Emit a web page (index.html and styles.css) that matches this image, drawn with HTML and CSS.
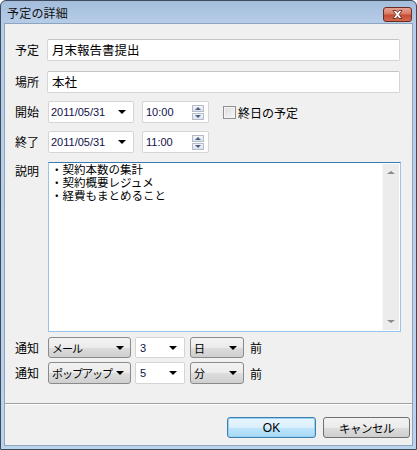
FILE: index.html
```html
<!DOCTYPE html>
<html lang="ja">
<head>
<meta charset="utf-8">
<link rel="stylesheet" href="styles.css">
</head>
<body>
<div class="window">
  <div class="titlebar">
    <span class="title">予定の詳細</span>
    <span class="close">
      <svg width="29" height="15" viewBox="0 0 29 15">
        <path d="M10 3.5 L13 3.5 L14.5 5.5 L16 3.5 L19 3.5 L16.2 7.5 L19 11.5 L16 11.5 L14.5 9.5 L13 11.5 L10 11.5 L12.8 7.5 Z" fill="#fff" stroke="#5a1a10" stroke-width="0.8"/>
      </svg>
    </span>
  </div>
  <div class="client">
    <div class="row r1">
      <span class="label">予定</span>
      <div class="textbox wide">月末報告書提出</div>
    </div>
    <div class="row r2">
      <span class="label">場所</span>
      <div class="textbox wide">本社</div>
    </div>
    <div class="row r3">
      <span class="label">開始</span>
      <div class="ecombo date"><span class="num">2011/05/31</span><span class="arrow"></span></div>
      <div class="timebox"><span class="num">10:00</span>
        <span class="spin"><span class="sb up"></span><span class="sb down"></span></span>
      </div>
      <span class="check"></span><span class="checklabel">終日の予定</span>
    </div>
    <div class="row r4">
      <span class="label">終了</span>
      <div class="ecombo date"><span class="num">2011/05/31</span><span class="arrow"></span></div>
      <div class="timebox"><span class="num">11:00</span>
        <span class="spin"><span class="sb up"></span><span class="sb down"></span></span>
      </div>
    </div>
    <div class="row desc">
      <span class="label">説明</span>
      <div class="textarea">
        <div class="lines">
          <div class="line">・契約本数の集計</div>
          <div class="line">・契約概要レジュメ</div>
          <div class="line">・経費もまとめること</div>
        </div>
        <div class="vscroll"><span class="sup"></span><span class="sdown"></span></div>
      </div>
    </div>
    <div class="row n1">
      <span class="label">通知</span>
      <div class="dcombo c1"><span class="ctext">メール</span><span class="arrow"></span></div>
      <div class="ecombo c2"><span class="num">3</span><span class="arrow"></span></div>
      <div class="dcombo c3"><span class="ctext">日</span><span class="arrow"></span></div>
      <span class="mae">前</span>
    </div>
    <div class="row n2">
      <span class="label">通知</span>
      <div class="dcombo c1"><span class="ctext">ポップアップ</span><span class="arrow"></span></div>
      <div class="ecombo c2"><span class="num">5</span><span class="arrow"></span></div>
      <div class="dcombo c3"><span class="ctext">分</span><span class="arrow"></span></div>
      <span class="mae">前</span>
    </div>
    <div class="sep"></div>
    <div class="buttons">
      <div class="btn ok">OK</div>
      <div class="btn cancel">キャンセル</div>
    </div>
  </div>
</div>
</body>
</html>
```

FILE: styles.css
```css
html, body {
  margin: 0;
  padding: 0;
  background: #ffffff;
}
body {
  width: 417px;
  height: 450px;
  overflow: hidden;
  font-family: "Noto Sans CJK JP", "Liberation Sans", sans-serif;
  font-size: 12px;
  color: #000;
}
.window {
  box-sizing: border-box;
  width: 417px;
  height: 450px;
  border: 1px solid #3d4a5c;
  border-radius: 6px 6px 0 0;
  background: linear-gradient(#a3bddb 0px, #b6cde7 22px, #bcd3ec 100%);
  padding: 0 3px 3px 3px;
  display: flex;
  flex-direction: column;
}
.titlebar {
  height: 22px;
  display: flex;
  align-items: center;
  justify-content: space-between;
  flex: none;
}
.title {
  padding-left: 3px;
  margin-top: 1px;
  font-size: 12px;
  color: #111;
  letter-spacing: 0.2px;
}
.close {
  width: 29px;
  height: 15px;
  margin-top: 4px;
  margin-right: 1px;
  box-sizing: border-box;
  border: 1px solid #6b2a22;
  border-radius: 3px;
  background: linear-gradient(#e8a393 0%, #d77a66 45%, #c44a33 55%, #d36b4f 100%);
  display: flex;
}
.close svg { display: block; margin: -1px; }
.client {
  flex: 1;
  background: #f0f0f0;
  border: 1px solid #8ea5c2;
  padding: 15px 0 0 10px;
  display: flex;
  flex-direction: column;
}
.row {
  display: flex;
  align-items: center;
  height: 22px;
  flex: none;
  white-space: nowrap;
}
.r2 { margin-top: 10px; }
.r3 { margin-top: 8px; }
.r4 { margin-top: 8px; }
.desc { margin-top: 9px; height: 170px; align-items: flex-start; }
.n1 { margin-top: 5px; height: 21px; }
.n2 { margin-top: 4px; height: 22px; }
.label {
  width: 32px;
  flex: none;
  line-height: 16px;
}
.desc .label { margin-top: 1px; }
.num {
  font-family: "Liberation Sans", "DejaVu Sans", sans-serif;
  font-size: 11px;
  color: #10104a;
}
.textbox {
  box-sizing: border-box;
  height: 22px;
  background: #fff;
  border: 1px solid #d5d5d5;
  border-top-color: #c4c4c4;
  border-radius: 2px;
  padding: 0 4px;
  line-height: 19px;
  font-size: 12.5px;
}
.wide { width: 353px; }
.ecombo {
  box-sizing: border-box;
  height: 22px;
  background: #fff;
  border: 1px solid #d5d5d5;
  border-radius: 2px;
  display: flex;
  align-items: center;
  justify-content: space-between;
  padding: 0 7px 0 2px;
}
.date { width: 86px; margin-left: 1px; }
.arrow {
  width: 0;
  height: 0;
  border-left: 4px solid transparent;
  border-right: 4px solid transparent;
  border-top: 4px solid #000;
  flex: none;
}
.timebox {
  box-sizing: border-box;
  width: 67px;
  height: 22px;
  margin-left: 8px;
  background: #fff;
  border: 1px solid #d5d5d5;
  border-radius: 2px;
  display: flex;
  align-items: center;
  justify-content: space-between;
  padding: 0 4px 0 3px;
}
.spin {
  display: flex;
  flex-direction: column;
  gap: 1px;
}
.sb {
  box-sizing: border-box;
  width: 12px;
  height: 7px;
  border: 1px solid #b5bcc7;
  background: linear-gradient(#f3f5f8, #dde3ec);
  position: relative;
}
.sb::after {
  content: "";
  position: absolute;
  left: 2px;
  width: 0;
  height: 0;
  border-left: 3px solid transparent;
  border-right: 3px solid transparent;
}
.up::after { top: 1px; border-bottom: 3px solid #4a5f8c; }
.down::after { top: 1px; border-top: 3px solid #4a5f8c; }
.check {
  box-sizing: border-box;
  width: 13px;
  height: 13px;
  margin-left: 14px;
  border: 1px solid #8f8f8f;
  background: linear-gradient(135deg, #dcdcdc, #f6f6f6);
  box-shadow: inset 0 0 0 1px #f4f4f4;
  flex: none;
}
.checklabel { margin-left: 2px; }
.textarea {
  box-sizing: border-box;
  width: 353px;
  height: 170px;
  margin-left: 1px;
  background: #fff;
  border: 1px solid #9cc3e8;
  border-top-color: #3d7bad;
  display: flex;
  justify-content: space-between;
}
.lines {
  padding: 1px 0 0 2px;
  font-family: "Liberation Sans", "Noto Sans CJK JP", sans-serif;
  font-size: 11.5px;
}
.line {
  height: 13px;
  line-height: 13px;
}
.vscroll {
  width: 16px;
  margin: 1px 1px 1px 0;
  background: #ececec;
  border-left: 1px solid #f6f6f6;
  position: relative;
}
.sup, .sdown {
  position: absolute;
  left: 4px;
  width: 0;
  height: 0;
  border-left: 4px solid transparent;
  border-right: 4px solid transparent;
}
.sup { top: 7px; border-bottom: 3px solid #8a8a8a; }
.sdown { bottom: 7px; border-top: 3px solid #8a8a8a; }
.dcombo {
  box-sizing: border-box;
  height: 21px;
  border: 1px solid #8a8a8a;
  border-radius: 3px;
  background: linear-gradient(#f3f3f3 0%, #ebebeb 50%, #dddddd 51%, #cfcfcf 100%);
  display: flex;
  align-items: center;
  justify-content: space-between;
  padding: 0 6px 0 3px;
  line-height: 16px;
}
.ctext {
  font-size: 11px;
  letter-spacing: -1px;
}
.c1 { width: 83px; margin-left: 1px; }
.c2 { width: 50px; height: 21px; margin-left: 4px; padding-left: 4px; }
.c3 { width: 54px; margin-left: 5px; }
.n2 .dcombo, .n2 .ecombo { height: 22px; }
.mae { margin-left: 6px; }
.sep {
  margin: 19px 0 0 -10px;
  height: 1px;
  background: #a0a0a0;
  border-bottom: 1px solid #ffffff;
  flex: none;
}
.buttons {
  margin-top: 12px;
  display: flex;
  justify-content: flex-end;
  padding-right: 2px;
  gap: 7px;
}
.btn {
  box-sizing: border-box;
  height: 21px;
  border: 1px solid #707070;
  border-radius: 3px;
  background: linear-gradient(#f2f2f2 0%, #ebebeb 50%, #dddddd 51%, #cfcfcf 100%);
  display: flex;
  align-items: center;
  justify-content: center;
  line-height: 16px;
}
.ok {
  width: 89px;
  border-color: #3c7fb1;
  box-shadow: inset 0 0 0 1px #98d1ef;
  background: linear-gradient(#eaf6fd 0%, #d9f0fc 50%, #bee6fd 51%, #a7d9f5 100%);
  font-family: "Liberation Sans", sans-serif;
  font-size: 12px;
}
.cancel { width: 87px; font-size: 11.5px; letter-spacing: -0.5px; }
```
